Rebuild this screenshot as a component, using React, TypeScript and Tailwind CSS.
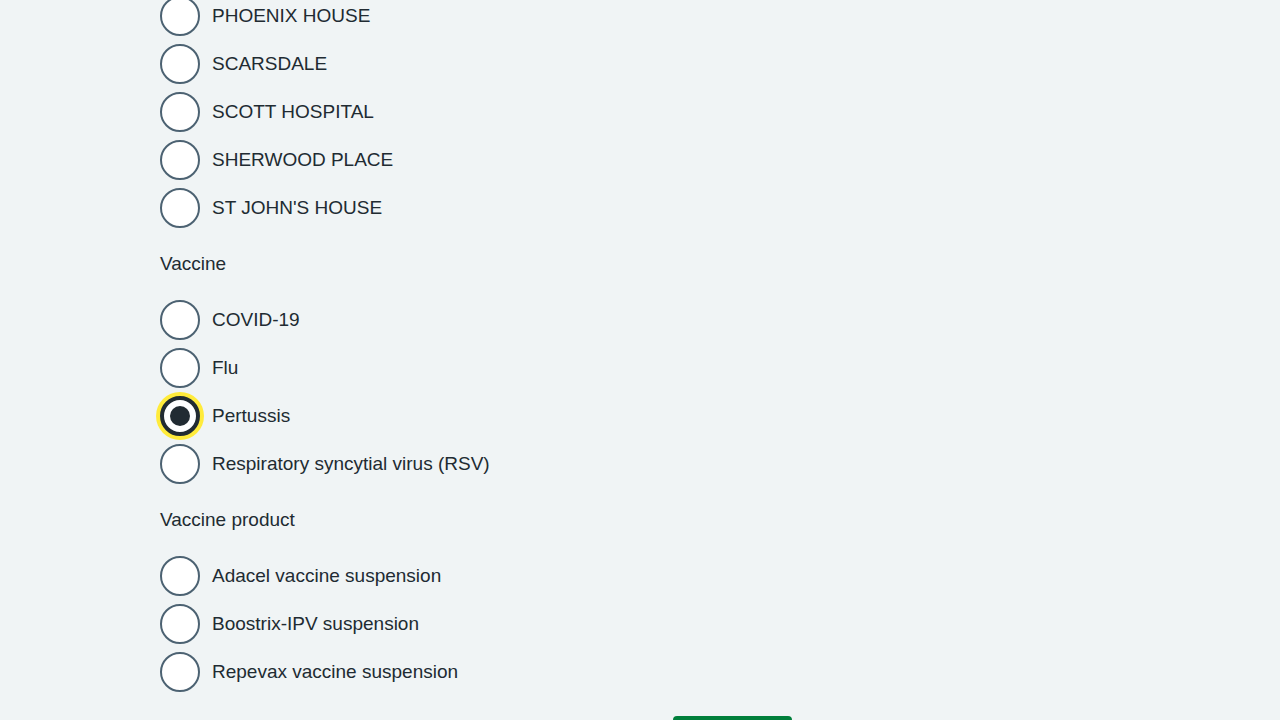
import React, { useState } from 'react';

type Group = { legend?: string; name: string; options: string[] };

const groups: Group[] = [
  { name: 'site', options: ['PHOENIX HOUSE', 'SCARSDALE', 'SCOTT HOSPITAL', 'SHERWOOD PLACE', "ST JOHN'S HOUSE"] },
  { legend: 'Vaccine', name: 'vaccine', options: ['COVID-19', 'Flu', 'Pertussis', 'Respiratory syncytial virus (RSV)'] },
  { legend: 'Vaccine product', name: 'product', options: ['Adacel vaccine suspension', 'Boostrix-IPV suspension', 'Repevax vaccine suspension'] },
];

const Radio: React.FC<{ label: string; checked: boolean; focused: boolean; onSelect: () => void }> = ({ label, checked, focused, onSelect }) => (
  <label className="flex items-center h-10 cursor-pointer" onClick={onSelect}>
    <span
      className={`relative w-10 h-10 shrink-0 rounded-full bg-white flex items-center justify-center ${
        checked ? 'border-4 border-[#212b32]' : 'border-2 border-[#4c6272]'
      } ${focused ? 'shadow-[0_0_0_4px_#ffeb3b]' : ''}`}
    >
      {checked && <span className="w-5 h-5 rounded-full bg-[#212b32]" />}
    </span>
    <span className="ml-3 text-[19px] leading-7 text-[#212b32]">{label}</span>
  </label>
);

export default function App() {
  const [values, setValues] = useState<Record<string, string>>({ vaccine: 'Pertussis' });

  return (
    <div className="h-[720px] overflow-hidden bg-[#f0f4f5] font-['Liberation_Sans',Arial,sans-serif]">
      <div className="w-[960px] mx-auto -mt-1">
        {groups.map((g) => (
          <div key={g.name}>
            {g.legend && (
              <div className="mt-[22px] mb-[22px] text-[19px] leading-7 text-[#212b32]">{g.legend}</div>
            )}
            <div className="flex flex-col gap-2">
              {g.options.map((o) => (
                <Radio
                  key={o}
                  label={o}
                  checked={values[g.name] === o}
                  focused={values[g.name] === o}
                  onSelect={() => setValues({ ...values, [g.name]: o })}
                />
              ))}
            </div>
          </div>
        ))}
        {/* submit button, only its top edge is in view */}
        <div className="mt-6 pl-[513px]">
          <button
            aria-label="Continue"
            className="w-[119px] h-[46px] rounded-[4px] bg-[#007f3b] shadow-[0_4px_0_#00401e]"
          />
        </div>
      </div>
    </div>
  );
}
